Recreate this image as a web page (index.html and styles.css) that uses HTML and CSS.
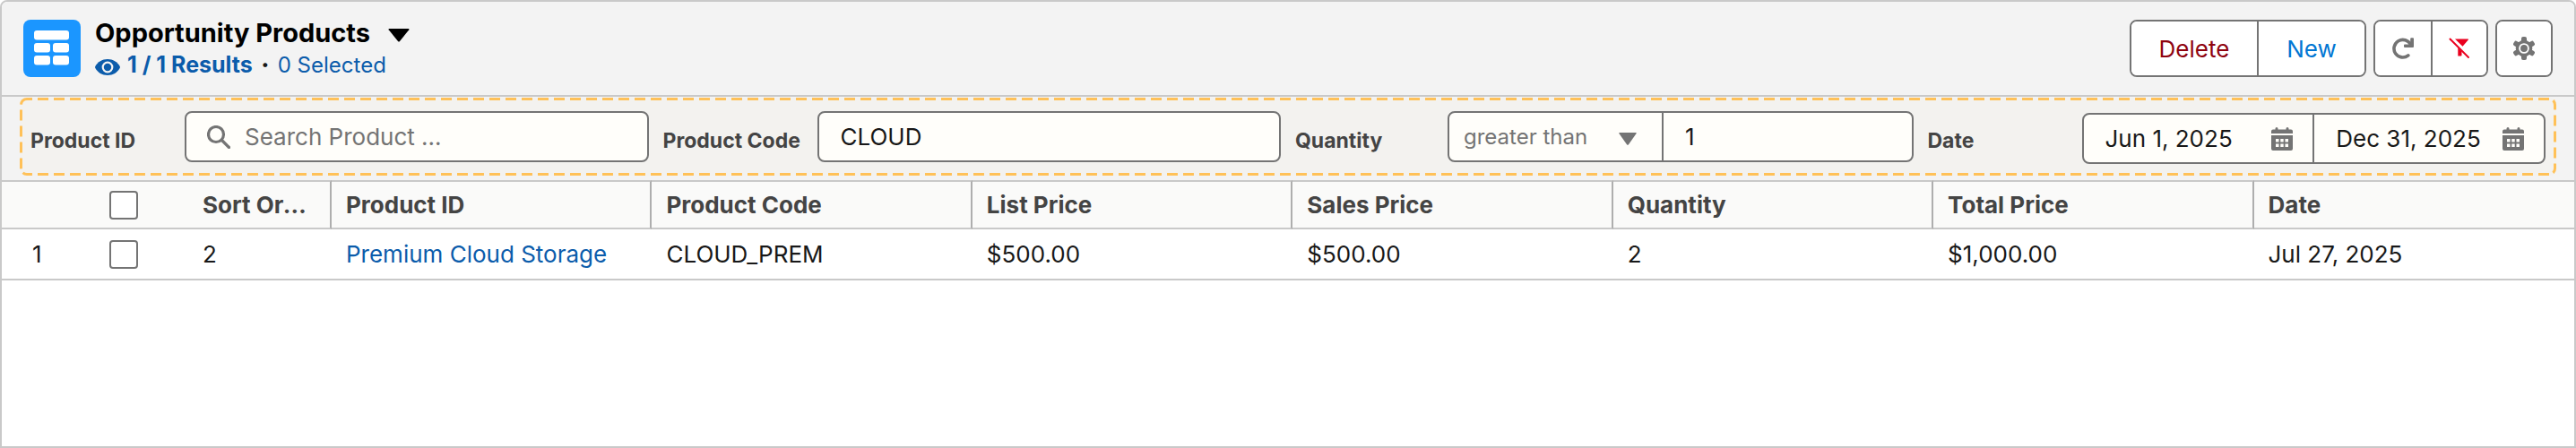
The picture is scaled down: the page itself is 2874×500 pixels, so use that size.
FILE: index.html
```html
<!DOCTYPE html>
<html lang="en">
<head>
<meta charset="utf-8">
<title>Opportunity Products</title>
<link rel="stylesheet" href="styles.css">
</head>
<body>
<main class="card">
  <header class="header">
    <svg class="logo" viewBox="0 0 64 64" aria-hidden="true">
      <rect width="64" height="64" rx="8" fill="#1b96ff"/>
      <g fill="#fff">
        <rect x="12" y="12" width="39" height="10.500" rx="3"/>
        <rect x="12" y="26" width="18" height="10.500" rx="3"/>
        <rect x="33" y="26" width="18" height="10.500" rx="3"/>
        <rect x="12" y="40" width="18" height="10.500" rx="3"/>
        <rect x="33" y="40" width="18" height="10.500" rx="3"/>
      </g>
    </svg>
    <div class="heading">
      <div class="title-row">
        <h1 class="title">Opportunity Products</h1>
        <button class="title-menu" type="button" aria-label="Choose list">
          <svg class="caret" viewBox="0 0 24 15" aria-hidden="true"><path d="M1.500 0h21q1.500 0 .8 1.200L13 14q-1 1-2 0L.7 1.200Q0 0 1.500 0z" fill="currentColor"/></svg>
        </button>
      </div>
      <div class="summary">
        <svg class="eye" viewBox="0 0 28 18" aria-hidden="true"><path d="M.3 8C3 3 8 0 14 0s11 3 13.700 8q.5 1 0 2C25 15 20 18 14 18S3 15 .3 10q-.5-1 0-2z" fill="currentColor"/><circle cx="14" cy="9" r="5.300" fill="none" stroke="#f3f3f3" stroke-width="2.200"/></svg>
        <a class="link results" href="#">1 / 1 Results</a>
        <span class="dot">·</span>
        <a class="link" href="#">0 Selected</a>
      </div>
    </div>
    <div class="actions">
      <div class="button-group">
        <button class="button delete" type="button">Delete</button>
        <button class="button new" type="button">New</button>
      </div>
      <div class="button-group">
        <button class="button icon-button" type="button" aria-label="Refresh">
          <svg class="icon" viewBox="0 0 24 24" aria-hidden="true"><path d="M17.800 19.900A9.800 9.800 0 1 1 20.500 7.800" fill="none" stroke="#747474" stroke-width="3.600" stroke-linecap="round"/><path d="M20.200 1.200q0-1 1-1H23q1 0 1 1V10q0 1-1 1h-9q-1 0-1-1V8.600q0-1 1-1h6.200z" fill="#747474"/></svg>
        </button>
        <button class="button icon-button" type="button" aria-label="Clear filters">
          <svg class="icon" viewBox="0 0 24 24" aria-hidden="true"><path d="M7 1.500h14.500q.8.200.3 1L15.500 9.700zM10.300 11.300 14.500 15.600V19.500q0 1-1 1h-3.200z" fill="#ea001e"/><path d="M1.500 1.500 22 22" stroke="#ea001e" stroke-width="2" stroke-linecap="round"/></svg>
        </button>
      </div>
      <div class="button-group">
        <button class="button icon-button" type="button" aria-label="Settings">
          <svg class="icon gear" viewBox="0 0 26 26" aria-hidden="true">
            <g fill="#747474">
              <circle cx="13" cy="13" r="9.300"/>
              <rect x="10" y="0" width="6" height="26" rx="2"/>
              <rect x="10" y="0" width="6" height="26" rx="2" transform="rotate(60 13 13)"/>
              <rect x="10" y="0" width="6" height="26" rx="2" transform="rotate(120 13 13)"/>
            </g>
            <circle cx="13" cy="13" r="4.900" fill="none" stroke="#fff" stroke-width="1.900"/>
          </svg>
        </button>
      </div>
    </div>
  </header>

  <div class="filter-bar">
    <form class="filters">
      <svg class="outline" aria-hidden="true"><rect width="100%" height="100%" rx="8" fill="none" stroke="#ffc158" stroke-width="6" stroke-dasharray="12 6" stroke-dashoffset="6"/></svg>
      <div class="filter">
        <label class="filter-label" for="product-id">Product ID</label>
        <div class="control">
          <svg class="search-icon" viewBox="0 0 26 26" aria-hidden="true"><circle cx="10" cy="10" r="8.500" fill="none" stroke="#747474" stroke-width="3.200"/><path d="M16.500 16.500 24.500 24.500" stroke="#747474" stroke-width="3.200" stroke-linecap="round"/></svg>
          <input class="input search" id="product-id" type="text" placeholder="Search Product ...">
        </div>
      </div>
      <div class="filter">
        <label class="filter-label" for="product-code">Product Code</label>
        <div class="control"><input class="input" id="product-code" type="text" value="CLOUD"></div>
      </div>
      <div class="filter">
        <label class="filter-label compact" for="quantity">Quantity</label>
        <div class="control">
          <div class="operator">
            <select class="select" aria-label="Quantity operator"><option>greater than</option></select>
            <svg class="select-caret" viewBox="0 0 20 14" aria-hidden="true"><path d="M1 0h18q1.300 0 .6 1.100L11 13.200q-1 1-2 0L.4 1.100Q-.3 0 1 0z" fill="#747474"/></svg>
          </div>
          <input class="input" id="quantity" type="text" value="1">
        </div>
      </div>
      <div class="filter">
        <label class="filter-label" for="date-from">Date</label>
        <div class="control dates">
          <div class="date">
            <input class="input" id="date-from" type="text" value="Jun 1, 2025">
            <svg class="calendar" viewBox="0 0 24 26" aria-hidden="true"><path fill-rule="evenodd" fill="#747474" d="M0 7V4.500Q0 2.500 2 2.500h2.500V1.500q0-1.500 1.500-1.500t1.500 1.500v1h9V1.500q0-1.500 1.500-1.500t1.500 1.500v1H22q2 0 2 2V7zM0 9h24v15q0 2-2 2H2q-2 0-2-2zM5 13v3.500h3.500V13zm5.300 0v3.500h3.400V13zm5.200 0v3.500H19V13zM5 18.500V22h3.500v-3.500zm5.300 0V22h3.400v-3.500zm5.200 0V22H19v-3.500z"/></svg>
          </div>
          <div class="date">
            <input class="input" type="text" value="Dec 31, 2025" aria-label="Date to">
            <svg class="calendar" viewBox="0 0 24 26" aria-hidden="true"><path fill-rule="evenodd" fill="#747474" d="M0 7V4.500Q0 2.500 2 2.500h2.500V1.500q0-1.500 1.500-1.500t1.500 1.500v1h9V1.500q0-1.500 1.500-1.500t1.500 1.500v1H22q2 0 2 2V7zM0 9h24v15q0 2-2 2H2q-2 0-2-2zM5 13v3.500h3.500V13zm5.300 0v3.500h3.400V13zm5.200 0v3.500H19V13zM5 18.500V22h3.500v-3.500zm5.300 0V22h3.400v-3.500zm5.200 0V22H19v-3.500z"/></svg>
          </div>
        </div>
      </div>
    </form>
  </div>

  <table class="table">
    <colgroup><col class="col-number"><col class="col-check"><col class="col-sort"><col><col><col><col><col><col><col></colgroup>
    <thead>
      <tr>
        <th></th>
        <th><input class="checkbox" type="checkbox" aria-label="Select all"></th>
        <th class="divided">Sort Order</th>
        <th class="divided">Product ID</th>
        <th class="divided">Product Code</th>
        <th class="divided">List Price</th>
        <th class="divided">Sales Price</th>
        <th class="divided">Quantity</th>
        <th class="divided">Total Price</th>
        <th>Date</th>
      </tr>
    </thead>
    <tbody>
      <tr>
        <td class="number">1</td>
        <td><input class="checkbox" type="checkbox" aria-label="Select row 1"></td>
        <td>2</td>
        <td><a class="link" href="#">Premium Cloud Storage</a></td>
        <td>CLOUD_PREM</td>
        <td>$500.00</td>
        <td>$500.00</td>
        <td>2</td>
        <td>$1,000.00</td>
        <td>Jul 27, 2025</td>
      </tr>
    </tbody>
  </table>
</main>
</body>
</html>
```

FILE: styles.css
```css
* {
  box-sizing: border-box;
}

body {
  margin: 0;
  background: #fff;
  color: #181818;
  font-family: Inter, "Liberation Sans", sans-serif;
  font-size: 26px;
}

button,
input,
select {
  margin: 0;
  font: inherit;
  color: inherit;
}

.card {
  min-height: 100vh;
  border: 2px solid #c9c9c9;
  border-radius: 8px 8px 0 0;
  background: #fff;
  overflow: hidden;
}

.header {
  display: flex;
  align-items: flex-start;
  height: 106px;
  padding: 20px 24px 0;
  border-bottom: 2px solid #c9c9c9;
  background: #f3f3f3;
}

.logo {
  width: 64px;
  height: 64px;
  margin-right: 16px;
}

.heading {
  flex: 1;
}

.title-row {
  display: flex;
  align-items: center;
  gap: 20px;
  height: 30px;
}

.title {
  margin: 0;
  color: #000;
  font-size: 29px;
  font-weight: 700;
  line-height: 30px;
}

.title-menu {
  display: flex;
  padding: 4px 0 0;
  border: 0;
  background: none;
  color: #000;
}

.caret {
  width: 24px;
  height: 15px;
}

.summary {
  display: flex;
  align-items: center;
  height: 40px;
  font-size: 24px;
}

.eye {
  width: 28px;
  height: 18px;
  margin: 6px 8px 0 0;
  color: #0b5cab;
}

.link {
  color: #0b5cab;
  text-decoration: none;
}

.results {
  font-size: 25px;
  font-weight: 700;
}

.dot {
  width: 28px;
  font-size: 29px;
  font-weight: 700;
  text-align: center;
}

.actions {
  display: flex;
  gap: 8px;
}

.button-group {
  display: flex;
  height: 64px;
  border: 2px solid #747474;
  border-radius: 8px;
  background: #fff;
  overflow: hidden;
}

.button {
  display: flex;
  align-items: center;
  justify-content: center;
  width: 120px;
  padding: 0;
  border: 0;
  background: #fff;
}

.button + .button {
  border-left: 2px solid #747474;
}

.delete {
  width: 140px;
  color: #8e030f;
}

.new {
  color: #0176d3;
}

.icon-button {
  width: 60px;
}

.icon-button + .icon-button,
.icon-button:not(:last-child) {
  width: 62px;
}

.icon {
  width: 24px;
  height: 24px;
}

.gear {
  width: 26px;
  height: 26px;
}

.filter-bar {
  padding: 1px 20px 5px;
  background: #f3f3f3;
}

.filters {
  display: grid;
  position: relative;
  grid-template-columns: repeat(4, 1fr);
  gap: 16px;
  height: 87px;
  padding: 15px 12px 0;
  border-radius: 8px;
  background: #f3f2ef;
}

.outline {
  position: absolute;
  inset: 0;
  width: 100%;
  height: 100%;
  border-radius: 8px;
  pointer-events: none;
}

.filter {
  display: flex;
  align-items: flex-start;
}

.filter-label {
  width: 172px;
  padding-top: 19px;
  color: #444;
  font-size: 23px;
  font-weight: 700;
  line-height: 28px;
  white-space: nowrap;
}

.compact {
  width: 170px;
}

.control {
  display: flex;
  position: relative;
  flex: 1;
  height: 57px;
  border: 2px solid #747474;
  border-radius: 8px;
  background: #fffefa;
  overflow: hidden;
}

.input {
  flex: 1;
  min-width: 0;
  width: 100%;
  padding: 0 24px;
  border: 0;
  outline: 0;
  background: transparent;
}

.search {
  padding-left: 65px;
}

.search::placeholder {
  color: #747474;
  opacity: 1;
}

.search-icon {
  position: absolute;
  top: 14px;
  left: 23px;
  width: 26px;
  height: 26px;
}

.operator {
  position: relative;
  width: 239px;
  border-right: 2px solid #747474;
}

.select {
  width: 100%;
  height: 100%;
  padding: 0 16px;
  border: 0;
  appearance: none;
  background: transparent;
  color: #747474;
  font-size: 24px;
}

.select-caret {
  position: absolute;
  top: 22px;
  right: 28px;
  width: 20px;
  height: 14px;
}

.dates {
  margin-top: 2px;
}

.date {
  display: flex;
  flex: 1;
  align-items: center;
  padding-right: 22px;
}

.date + .date {
  border-left: 2px solid #747474;
}

.date .input {
  height: 53px;
  padding-right: 0;
}

.calendar {
  width: 24px;
  height: 26px;
}

.table {
  width: 100%;
  border-spacing: 0;
  table-layout: fixed;
}

.col-number {
  width: 104px;
}

.col-check {
  width: 104px;
}

.col-sort {
  width: 160px;
}

.table th,
.table td {
  padding: 0 16px;
  border-bottom: 2px solid #c9c9c9;
  overflow: hidden;
  text-align: left;
  text-overflow: ellipsis;
  white-space: nowrap;
}

.table th {
  height: 55px;
  border-top: 2px solid #c9c9c9;
  background: #fafaf9;
  color: #444;
  font-weight: 700;
}

.table td {
  height: 57px;
}

.table .number {
  padding-left: 34px;
}

.table .divided {
  border-right: 2px solid #aeaeae;
}

.checkbox {
  display: block;
  width: 32px;
  height: 32px;
  border: 2px solid #747474;
  border-radius: 4px;
  appearance: none;
  background: #fff;
}
```
